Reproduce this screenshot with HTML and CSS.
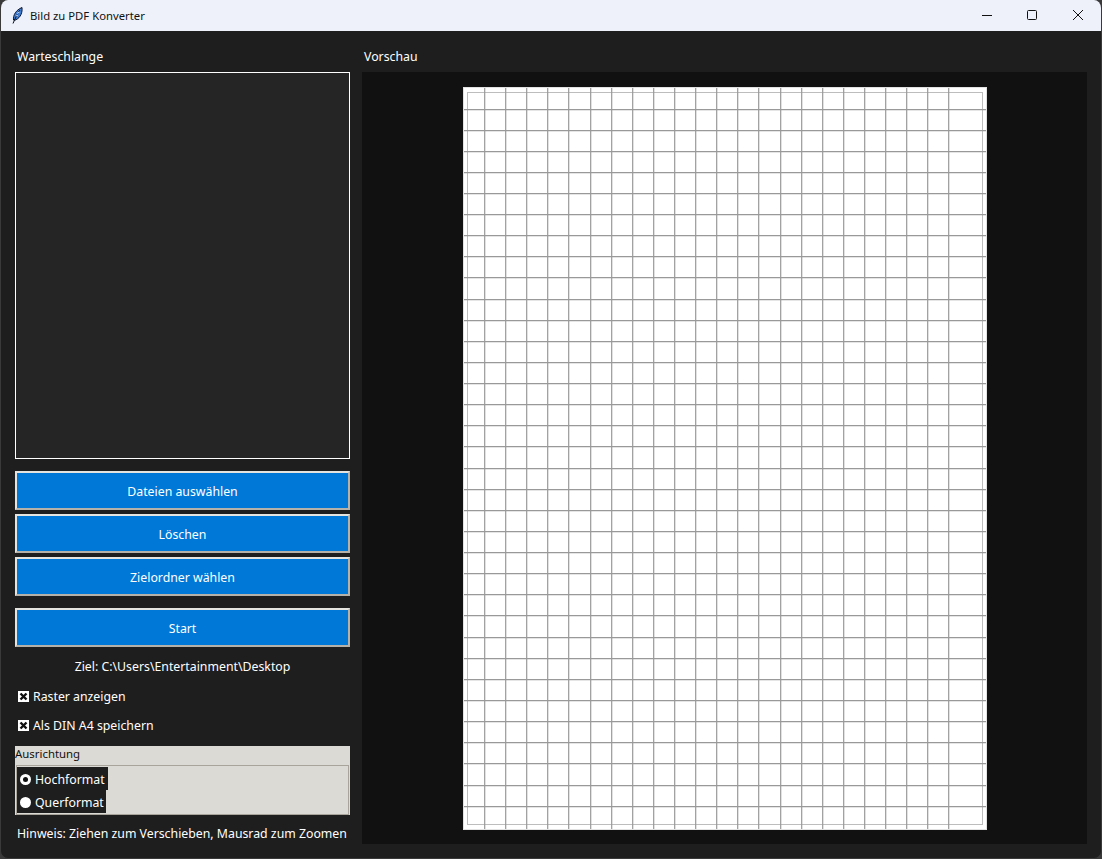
FILE: index.html
```html
<!DOCTYPE html>
<html lang="de">
<head>
  <meta charset="UTF-8">
  <title>Bild zu PDF Konverter</title>
  <link rel="stylesheet" href="styles.css">
</head>
<body>

  <div class="fenster">
    <header class="titelleiste">
      <svg class="feder" width="11" height="17" viewBox="0 0 11 17">
        <path d="M1.5 13 C1 8 4 3 10 0.5 C10.5 5 9 10.5 3.5 13 Z" fill="#3f7fd8" stroke="#0b1630" stroke-width="1"/>
        <path d="M1 16.5 L2.5 13 L6 6 L8 3" stroke="#06101f" stroke-width="1" fill="none"/>
        <path d="M4 9 L6 8 M5 6.5 L7.5 5" stroke="#cfe0ff" stroke-width="1" fill="none"/>
      </svg>
      <span class="titel">Bild zu PDF Konverter</span>
      <div class="fensterknoepfe">
        <svg width="10" height="10" viewBox="0 0 10 10"><path d="M0 5.5H10" stroke="#111" fill="none"/></svg>
        <svg width="10" height="10" viewBox="0 0 10 10"><rect x="0.5" y="0.5" width="9" height="9" rx="1" stroke="#111" fill="none"/></svg>
        <svg class="schliessen" width="10" height="10" viewBox="0 0 10 10"><path d="M0 0L10 10M10 0L0 10" stroke="#111" fill="none"/></svg>
      </div>
    </header>

    <main class="inhalt">
      <section class="links">
        <div class="ueberschrift">Warteschlange</div>
        <div class="warteschlange"></div>

        <button class="knopf knopf-erster">Dateien auswählen</button>
        <button class="knopf">Löschen</button>
        <button class="knopf">Zielordner wählen</button>
        <button class="knopf knopf-start">Start</button>

        <div class="ziel">Ziel: C:\Users\Entertainment\Desktop</div>

        <label class="haken haken-raster">
          <svg width="11" height="11" viewBox="0 0 11 11"><rect width="11" height="11" fill="#fff"/><path d="M2.5 2.5L8.5 8.5M8.5 2.5L2.5 8.5" stroke="#111" stroke-width="2.4" fill="none"/></svg>
          Raster anzeigen
        </label>
        <label class="haken haken-din">
          <svg width="11" height="11" viewBox="0 0 11 11"><rect width="11" height="11" fill="#fff"/><path d="M2.5 2.5L8.5 8.5M8.5 2.5L2.5 8.5" stroke="#111" stroke-width="2.4" fill="none"/></svg>
          Als DIN A4 speichern
        </label>

        <div class="ausrichtung">
          <div class="ausrichtung-titel">Ausrichtung</div>
          <div class="ausrichtung-rahmen">
            <label class="radio radio-hoch">
              <svg width="11" height="11" viewBox="0 0 11 11"><circle cx="5.5" cy="5.5" r="5.5" fill="#fff"/><circle cx="5.5" cy="5.5" r="2.5" fill="#111"/></svg>
              Hochformat
            </label>
            <label class="radio">
              <svg width="11" height="11" viewBox="0 0 11 11"><circle cx="5.5" cy="5.5" r="5.5" fill="#fff"/></svg>
              Querformat
            </label>
          </div>
        </div>

        <div class="hinweis">Hinweis: Ziehen zum Verschieben, Mausrad zum Zoomen</div>
      </section>

      <section class="rechts">
        <div class="ueberschrift">Vorschau</div>
        <div class="vorschau">
          <svg class="blatt" width="524" height="743" viewBox="0 0 524 743">
            <rect x="0.5" y="0.5" width="523" height="742" fill="#fff" stroke="#e2e2e2"/>
            <rect x="4.5" y="5.5" width="515" height="732" fill="none" stroke="#bdbdbd"/>
            <path class="raster" d="M21.7 1V742M42.7 1V742M63.7 1V742M84.7 1V742M105.7 1V742M127.7 1V742M148.7 1V742M169.7 1V742M190.7 1V742M211.7 1V742M232.7 1V742M253.7 1V742M274.7 1V742M295.7 1V742M317.7 1V742M338.7 1V742M359.7 1V742M380.7 1V742M401.7 1V742M422.7 1V742M443.7 1V742M464.7 1V742M485.7 1V742"/>
            <path class="raster" d="M1 22.7H523M1 43.7H523M1 64.7H523M1 85.7H523M1 106.7H523M1 127.7H523M1 148.7H523M1 169.7H523M1 190.7H523M1 212.7H523M1 233.7H523M1 254.7H523M1 275.7H523M1 296.7H523M1 317.7H523M1 338.7H523M1 359.7H523M1 381.7H523M1 402.7H523M1 423.7H523M1 444.7H523M1 465.7H523M1 486.7H523M1 507.7H523M1 528.7H523M1 550.7H523M1 571.7H523M1 592.7H523M1 613.7H523M1 634.7H523M1 655.7H523M1 676.7H523M1 698.7H523M1 719.7H523"/>
          </svg>
        </div>
      </section>
    </main>
  </div>

</body>
</html>
```

FILE: styles.css
```css
:root {
  --dunkel: #1e1e1e;
  --blau: #0078d7;
  --grau: #dcdad5;
}

html, body {
  margin: 0;
  padding: 0;
  height: 100%;
  background-color: #3a3a3a;
}

body {
  font-family: 'Noto Sans', 'Open Sans', sans-serif;
  font-size: 12.3px;
  color: #fff;
  overflow: hidden;
}

.fenster {
  height: 859px;
  box-sizing: border-box;
  display: flex;
  flex-direction: column;
  background-color: var(--dunkel);
  border: 1px solid #3a3a3a;
  border-top: 0;
  border-radius: 8px;
  overflow: hidden;
}

.titelleiste {
  height: 31px;
  flex: none;
  display: flex;
  align-items: center;
  background-color: #eef1fa;
  color: #111;
  padding-left: 11px;
}

.feder {
  margin-right: 7px;
  margin-bottom: 1px;
}

.titel {
  flex: 1;
  font-size: 11.3px;
}

.fensterknoepfe {
  display: flex;
  gap: 35px;
  padding-right: 18px;
  padding-bottom: 1px;
}

.schliessen {
  margin-left: 1px;
}

.inhalt {
  flex: 1;
  min-height: 0;
  display: flex;
  gap: 12px;
  padding: 15px 14px 14px;
}

.links {
  width: 335px;
  flex: none;
  display: flex;
  flex-direction: column;
}

.rechts {
  flex: 1;
  display: flex;
  flex-direction: column;
}

.ueberschrift {
  height: 22px;
  line-height: 22px;
  margin-bottom: 4px;
  padding-left: 2px;
}

.warteschlange {
  flex: 1;
  background-color: #252525;
  border: 1px solid #fff;
}

.knopf {
  height: 39px;
  margin-top: 4px;
  padding: 2px 0 0;
  flex: none;
  font-family: inherit;
  font-size: 12.3px;
  color: #fff;
  background-color: var(--blau);
  border: 2px solid;
  border-color: #e6e4df #b5b1a9 #b5b1a9 #e6e4df;
}

.knopf-erster {
  margin-top: 12px;
}

.knopf-start {
  margin-top: 12px;
}

.ziel {
  height: 22px;
  line-height: 22px;
  margin-top: 9px;
  text-align: center;
}

.haken {
  height: 22px;
  display: flex;
  align-items: center;
  gap: 4px;
  padding-left: 3px;
}

.haken-raster {
  margin-top: 7px;
}

.haken-din {
  margin-top: 7px;
}

.ausrichtung {
  margin-top: 10px;
  height: 69px;
  flex: none;
  box-sizing: border-box;
  background-color: var(--grau);
  color: #111;
  display: flex;
  flex-direction: column;
}

.ausrichtung-titel {
  height: 19px;
  line-height: 16px;
  font-size: 11.4px;
}

.ausrichtung-rahmen {
  flex: 1;
  margin: 0 1px 0 1px;
  padding: 1px 0;
  border: 1px solid #a8a49c;
  display: flex;
  flex-direction: column;
  align-items: flex-start;
}

.radio {
  height: 23px;
  box-sizing: border-box;
  display: flex;
  align-items: center;
  gap: 4px;
  padding: 1px 2px 0 3px;
  background-color: var(--dunkel);
  color: #fff;
}

.radio-hoch {
  padding-right: 3px;
}

.hinweis {
  height: 21px;
  line-height: 21px;
  margin-top: 8px;
  padding-left: 2px;
  white-space: nowrap;
}

.vorschau {
  flex: 1;
  display: flex;
  align-items: center;
  justify-content: center;
  background-color: #111;
}

.raster {
  fill: none;
  stroke: #999;
  stroke-width: 1.2;
}
```
